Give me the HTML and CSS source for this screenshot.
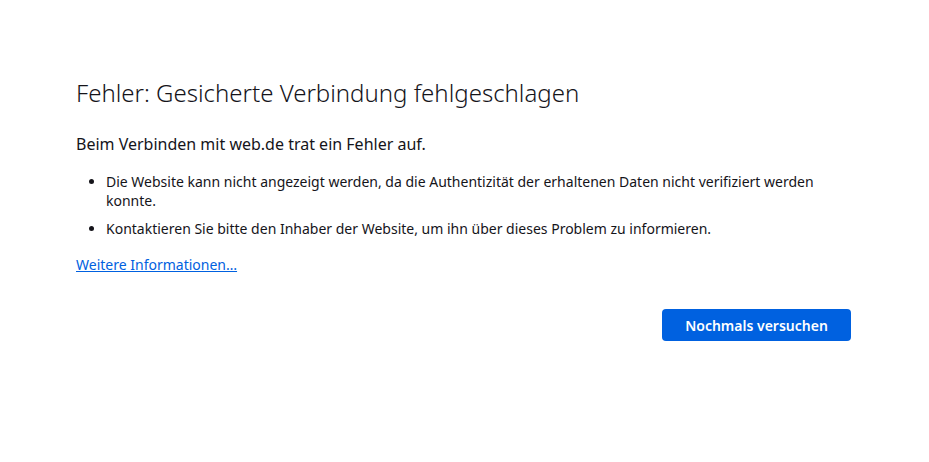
FILE: index.html
```html
<!DOCTYPE html>
<html lang="de">

<head>
    <meta charset="UTF-8">
    <title>Fehler: Gesicherte Verbindung fehlgeschlagen</title>
    <link rel="stylesheet" href="styles.css">
</head>

<body>
    <div class="container">
        <h1 class="title">Fehler: Gesicherte Verbindung fehlgeschlagen</h1>

        <p class="short-desc">Beim Verbinden mit web.de trat ein Fehler auf.</p>

        <ul class="long-desc">
            <li>Die Website kann nicht angezeigt werden, da die Authentizität der erhaltenen Daten nicht verifiziert werden konnte.</li>
            <li>Kontaktieren Sie bitte den Inhaber der Website, um ihn über dieses Problem zu informieren.</li>
        </ul>

        <a href="#" class="learn-more">Weitere Informationen…</a>

        <div class="button-row">
            <button type="button" class="btn-primary">Nochmals versuchen</button>
        </div>
    </div>
</body>

</html>
```

FILE: styles.css
```css
body {
    margin: 0;
    background-color: #fff;
    color: #15141a;
    font-family: "Noto Sans", sans-serif;
    font-size: 14px;
}

.container {
    width: 775px;
    margin-left: 76px;
    padding-top: 73px;
}

.title {
    margin: 0;
    font-size: 24px;
    font-weight: 300;
    line-height: 40px;
}

.short-desc {
    margin: 19px 0 0;
    font-size: 16px;
    line-height: 24px;
}

.long-desc {
    margin: 16px 0 0;
    padding-left: 30px;
    line-height: 19px;
}

.long-desc li {
    margin-bottom: 9px;
}

.learn-more {
    display: inline-block;
    margin-top: 8px;
    color: #0061e0;
    line-height: 20px;
}

.button-row {
    display: flex;
    justify-content: flex-end;
    margin-top: 34px;
}

.btn-primary {
    width: 189px;
    height: 32px;
    border: none;
    border-radius: 4px;
    background-color: #0061e0;
    color: #fff;
    font-family: inherit;
    font-size: 14px;
    font-weight: 600;
    cursor: pointer;
}
```
